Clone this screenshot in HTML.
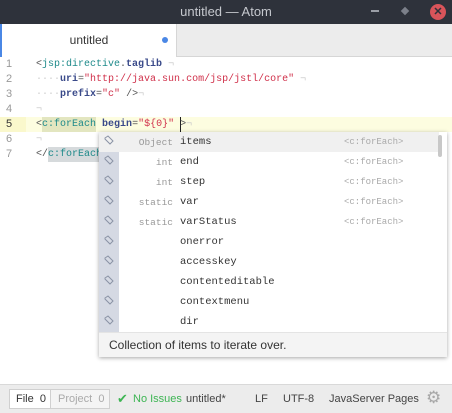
<!DOCTYPE html>
<html><head><meta charset="utf-8"><style>
*{margin:0;padding:0;box-sizing:border-box}
body{width:452px;height:413px;overflow:hidden;background:#fff;font-family:"Liberation Sans",sans-serif;position:relative}
.abs{position:absolute}
.title{left:0;top:0;width:452px;height:24px;background:#2e323b;color:#c5c8ce;font-size:13px;text-align:center;line-height:24px}
.tabbar{left:0;top:24px;width:452px;height:33px;background:#ececec;border-bottom:1px solid #d6d6d6}
.tab{left:0;top:24px;width:177px;height:33px;background:#fff;border-left:2px solid #4a87e5;border-right:1px solid #d6d6d6;font-size:12px;color:#333;text-align:center;line-height:32px}
.dot{left:162px;top:37px;width:6px;height:6px;border-radius:50%;background:#4a87e5}
.mono{font-family:"Liberation Mono",monospace;font-size:10px;white-space:pre}
.ln{left:0;width:26px;color:#999;font-size:11px;text-align:left;padding-left:6px;font-family:"Liberation Sans",sans-serif;height:15px;line-height:15px}
.code{left:36px;height:15px;line-height:15px}
.t{color:#1e8a8a}.a{color:#3a4a8a;font-weight:bold}.s{color:#d0304a}.p{color:#555}.i{color:#ccc}
.pop{left:99px;top:132px;width:348px;height:225px;background:#fff;box-shadow:0 1px 4px rgba(0,0,0,.35)}
.row{position:absolute;left:0;width:340px;height:20px;line-height:21px}
.ty{position:absolute;right:266px;color:#999;font-size:9.5px}
.nm{position:absolute;left:81px;color:#333;font-size:10.5px}
.lb{position:absolute;left:245px;color:#aaa;font-size:9px}
.desc{left:0;top:200px;width:348px;height:25px;background:#f4f4f4;border-top:1px solid #e4e4e4;font-size:12px;color:#333;line-height:24px;padding-left:10px}
.status{left:0;top:384px;width:452px;height:29px;background:#ececec;border-top:1px solid #d9d9d9;font-size:11px;color:#444}
</style></head><body>
<div class="abs title">untitled — Atom</div>
<div class="abs" style="left:371px;top:10px;width:8px;height:2px;background:#9a9ea6"></div>
<div class="abs" style="left:402px;top:8px;width:6px;height:6px;background:#7c808a;transform:rotate(45deg)"></div>
<div class="abs" style="left:430px;top:4px;width:16px;height:16px;border-radius:50%;background:#d9545a;color:#2e323b;font-size:11px;font-weight:bold;text-align:center;line-height:16px">✕</div>
<div class="abs tabbar"></div>
<div class="abs tab">untitled</div>
<div class="abs dot"></div>

<div class="abs" style="left:0;top:117px;width:452px;height:15px;background:#fdfde0"></div>
<div class="abs" style="left:0;top:117px;width:26px;height:15px;background:#faf8cc"></div>
<div class="abs" style="left:42px;top:117px;width:54px;height:15px;background:#e3e6c0"></div>
<div class="abs" style="left:48px;top:147px;width:54px;height:15px;background:#d6dadc"></div>
<div class="abs" style="left:180px;top:117px;width:1px;height:15px;background:#222"></div>

<div class="abs ln" style="top:57px">1</div>
<div class="abs ln" style="top:72px">2</div>
<div class="abs ln" style="top:87px">3</div>
<div class="abs ln" style="top:102px">4</div>
<div class="abs ln" style="top:117px;color:#333">5</div>
<div class="abs ln" style="top:132px">6</div>
<div class="abs ln" style="top:147px">7</div>

<div class="abs code mono" style="top:57px"><span class="p">&lt;</span><span class="t">jsp:directive</span><span class="p">.</span><span class="a">taglib</span><span class="i"> ¬</span></div>
<div class="abs code mono" style="top:72px"><span class="i">····</span><span class="a">uri</span><span class="p">=</span><span class="s">"http://java.sun.com/jsp/jstl/core"</span><span class="i"> ¬</span></div>
<div class="abs code mono" style="top:87px"><span class="i">····</span><span class="a">prefix</span><span class="p">=</span><span class="s">"c"</span><span class="p"> /&gt;</span><span class="i">¬</span></div>
<div class="abs code mono" style="top:102px"><span class="i">¬</span></div>
<div class="abs code mono" style="top:117px"><span class="p">&lt;</span><span class="t">c:forEach</span> <span class="a">begin</span><span class="p">=</span><span class="s">"${0}"</span> <span class="p">&gt;</span><span class="i">¬</span></div>
<div class="abs code mono" style="top:132px"><span class="i">¬</span></div>
<div class="abs code mono" style="top:147px"><span class="p">&lt;/</span><span class="t">c:forEach</span></div>

<div class="abs pop mono">
<div style="position:absolute;left:0;top:0;width:20px;height:200px;background:#d5d9e3"></div>
<div class="row" style="top:0;background:#f0f0f0"><span class="ty">Object</span><span class="nm">items</span><span class="lb">&lt;c:forEach&gt;</span></div>
<div class="row" style="top:20px"><span class="ty">int</span><span class="nm">end</span><span class="lb">&lt;c:forEach&gt;</span></div>
<div class="row" style="top:40px"><span class="ty">int</span><span class="nm">step</span><span class="lb">&lt;c:forEach&gt;</span></div>
<div class="row" style="top:60px"><span class="ty">static</span><span class="nm">var</span><span class="lb">&lt;c:forEach&gt;</span></div>
<div class="row" style="top:80px"><span class="ty">static</span><span class="nm">varStatus</span><span class="lb">&lt;c:forEach&gt;</span></div>
<div class="row" style="top:100px"><span class="nm">onerror</span></div>
<div class="row" style="top:120px"><span class="nm">accesskey</span></div>
<div class="row" style="top:140px"><span class="nm">contenteditable</span></div>
<div class="row" style="top:160px"><span class="nm">contextmenu</span></div>
<div class="row" style="top:180px"><span class="nm">dir</span></div>
<svg style="position:absolute;left:4px;top:3px" width="12" height="200" viewBox="0 0 12 200">
<g fill="none" stroke="#8a93a5" stroke-width="1">
<path d="M2 3 L5 1 L10 6 L7 9 L2 4 Z"/><path d="M2 23 L5 21 L10 26 L7 29 L2 24 Z"/><path d="M2 43 L5 41 L10 46 L7 49 L2 44 Z"/><path d="M2 63 L5 61 L10 66 L7 69 L2 64 Z"/><path d="M2 83 L5 81 L10 86 L7 89 L2 84 Z"/><path d="M2 103 L5 101 L10 106 L7 109 L2 104 Z"/><path d="M2 123 L5 121 L10 126 L7 129 L2 124 Z"/><path d="M2 143 L5 141 L10 146 L7 149 L2 144 Z"/><path d="M2 163 L5 161 L10 166 L7 169 L2 164 Z"/><path d="M2 183 L5 181 L10 186 L7 189 L2 184 Z"/>
</g></svg>
<div style="position:absolute;left:339px;top:3px;width:4px;height:22px;border-radius:2px;background:#c8c8c8"></div>
<div class="abs desc" style="font-family:'Liberation Sans',sans-serif">Collection of items to iterate over.</div>
</div>

<div class="abs status">
<div class="abs" style="left:9px;top:4px;width:101px;height:20px;border:1px solid #d0d0d0;background:#f4f4f4"></div>
<div class="abs" style="left:10px;top:5px;width:41px;height:18px;background:#fff;border-right:1px solid #d0d0d0"></div>
<div class="abs" style="left:16px;top:8px;color:#333">File&nbsp; 0</div>
<div class="abs" style="left:58px;top:8px;color:#aaa">Project&nbsp; 0</div>
<div class="abs" style="left:117px;top:6px;color:#3db553;font-size:13px">✔</div>
<div class="abs" style="left:133px;top:8px;color:#3db553">No Issues</div>
<div class="abs" style="left:186px;top:8px">untitled*</div>
<div class="abs" style="left:255px;top:8px">LF</div>
<div class="abs" style="left:283px;top:8px">UTF-8</div>
<div class="abs" style="left:329px;top:8px">JavaServer Pages</div>
<div class="abs" style="left:426px;top:3px;color:#a8a8a8;font-size:17px;font-family:'DejaVu Sans',sans-serif">⚙</div>
</div>
</body></html>
